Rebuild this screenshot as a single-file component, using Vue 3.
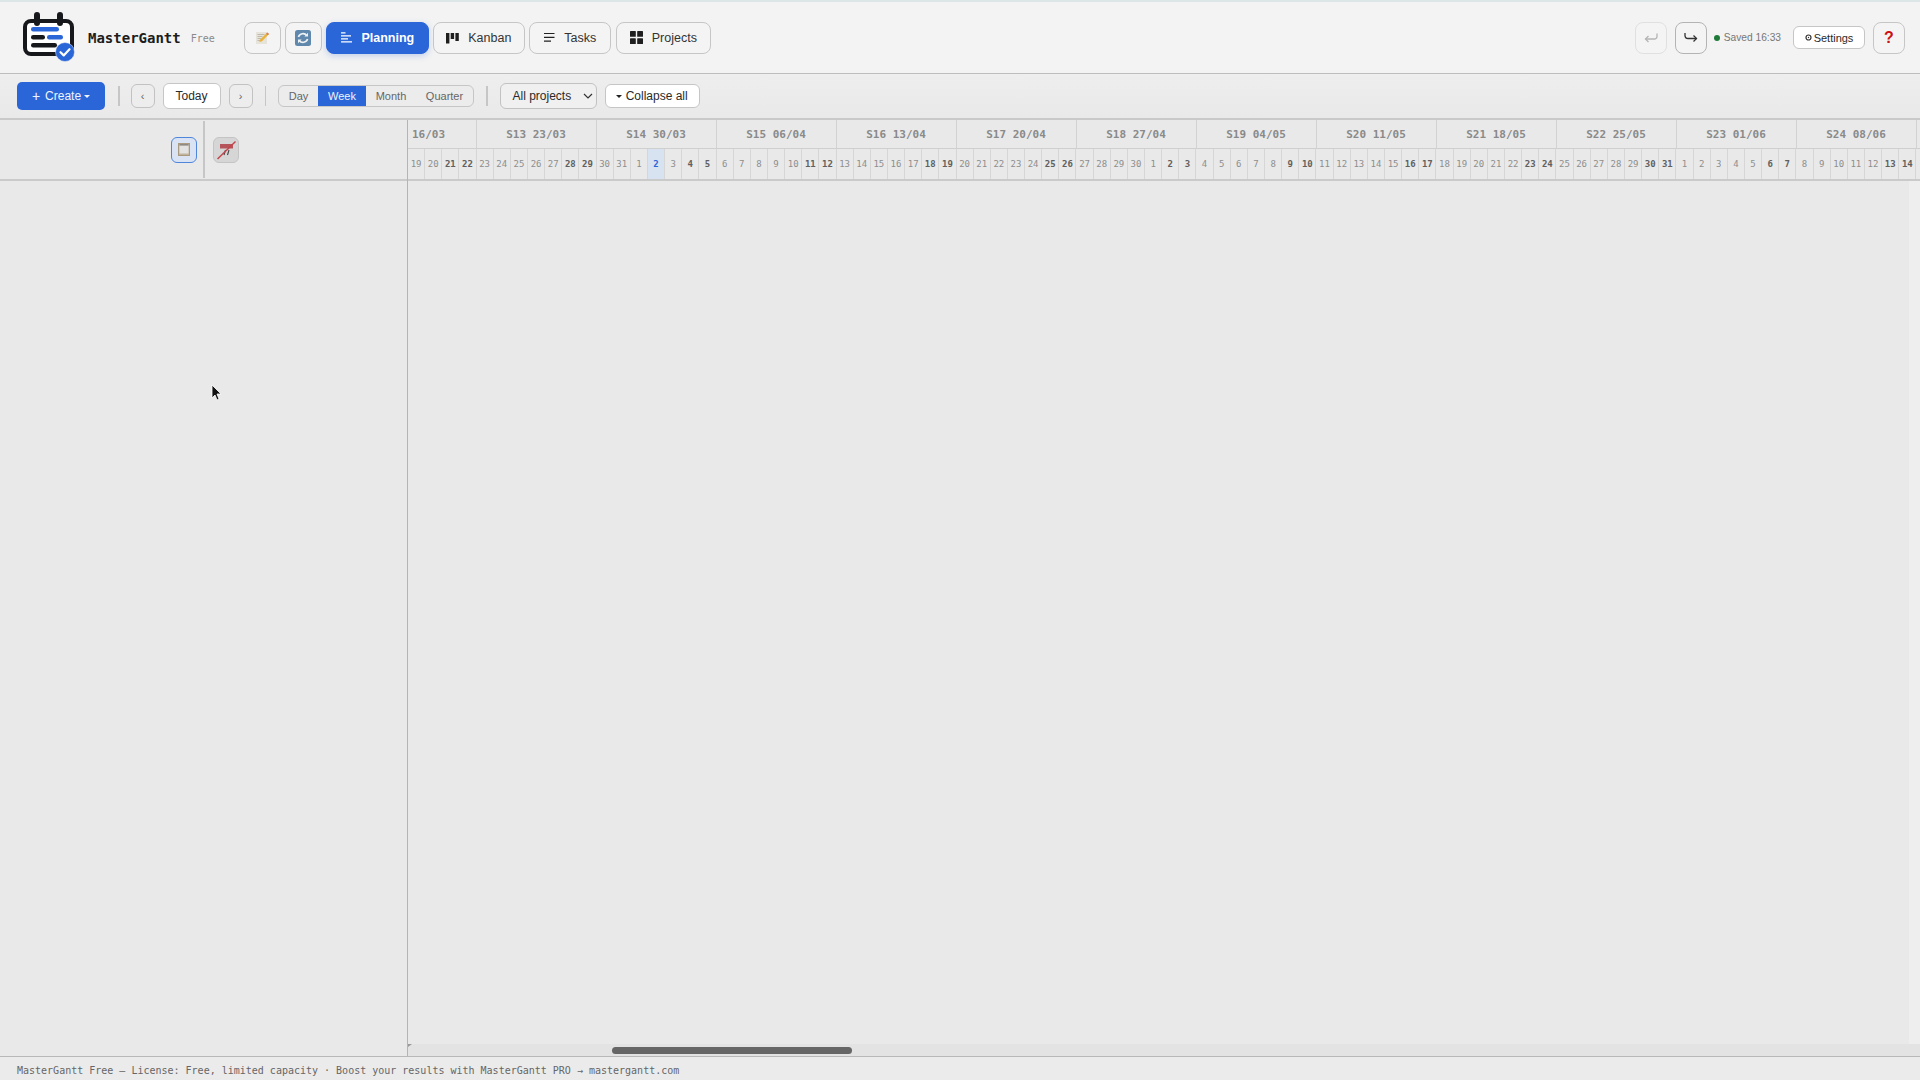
<script setup>
import { computed } from 'vue'
const months = [[3, 19, 31], [4, 1, 30], [5, 1, 31], [6, 1, 14]]
const days = computed(() => {
  const out = []
  for (const [m, a, b] of months) {
    for (let d = a; d <= b; d++) {
      const wd = new Date(2026, m - 1, d).getDay()
      out.push({ key: `${m}-${d}`, d, weekend: wd === 0 || wd === 6, today: m === 4 && d === 2 })
    }
  }
  return out
})
const weeks = [
  { t: '16/03', w: 4, first: true },
  { t: 'S13 23/03', w: 7 }, { t: 'S14 30/03', w: 7 }, { t: 'S15 06/04', w: 7 },
  { t: 'S16 13/04', w: 7 }, { t: 'S17 20/04', w: 7 }, { t: 'S18 27/04', w: 7 },
  { t: 'S19 04/05', w: 7 }, { t: 'S20 11/05', w: 7 }, { t: 'S21 18/05', w: 7 },
  { t: 'S22 25/05', w: 7 }, { t: 'S23 01/06', w: 7 }, { t: 'S24 08/06', w: 7 }
]
const dayW = 120 / 7
</script>

<template>
  <div class="app">
    <header class="top">
      <svg class="logo" width="54" height="50" viewBox="0 0 54 50">
        <rect x="3" y="9" width="47" height="33" rx="6" fill="#fff" stroke="#17181c" stroke-width="4"/>
        <path d="M15 3v8M38 3v8" stroke="#17181c" stroke-width="6" stroke-linecap="round"/>
        <rect x="9" y="15" width="28" height="4.500" rx="2.200" fill="#2b66d9"/>
        <rect x="9" y="23" width="14" height="4.500" rx="2.200" fill="#17181c"/>
        <rect x="25" y="23" width="16" height="4.500" rx="2.200" fill="#2b66d9"/>
        <rect x="9" y="31" width="26" height="4.500" rx="2.200" fill="#17181c"/>
        <circle cx="43" cy="40" r="9.500" fill="#2b66d9" stroke="#f3f3f3" stroke-width=".5"/>
        <path d="M38.500 40.200l3.200 3.200 5.800-6.200" fill="none" stroke="#fff" stroke-width="2.200" stroke-linecap="round" stroke-linejoin="round"/>
      </svg>
      <span class="brand">MasterGantt</span>
      <span class="plan">Free</span>
      <div class="nav">
        <button class="nbtn icon">
          <svg width="15" height="15" viewBox="0 0 15 15">
            <path d="M1 2h11v12H1z" fill="#e6e3da"/>
            <path d="M2.500 4.500h7M2.500 6.500h5M2.500 8.500h4M2.500 10.500h3" stroke="#b5b1a4" stroke-width=".8"/>
            <path d="M12.300 2.500l1.700 1.500-7 7.200-2.600.9.800-2.500z" fill="#e8b23c"/>
            <path d="M12.300 2.500l1.700 1.500-1.200 1.200-1.700-1.500z" fill="#d67a72"/>
          </svg>
        </button>
        <button class="nbtn icon">
          <svg width="16" height="16" viewBox="0 0 16 16">
            <rect width="16" height="16" rx="2.500" fill="#5f88ac"/>
            <path d="M3.400 7a4.800 4.800 0 0 1 8.400-1.400M12.600 9a4.800 4.800 0 0 1-8.400 1.400" fill="none" stroke="#eef2f5" stroke-width="1.600"/>
            <path d="M13 2.800v3.600H9.400zM3 13.200V9.600h3.600z" fill="#eef2f5"/>
          </svg>
        </button>
        <button class="nbtn active">
          <svg width="12" height="11" viewBox="0 0 12 11"><path d="M1 1h4.500M1 4h10M1 7h7M1 10h11" stroke="#fff" stroke-width="1.200" transform="translate(0 -.2)"/></svg>
          Planning
        </button>
        <button class="nbtn kanban">
          <svg width="13" height="12" viewBox="0 0 13 12" fill="#1f1f1f"><rect x="0" y="1" width="3.400" height="10.500"/><rect x="4.700" y="1" width="3.400" height="6"/><rect x="9.400" y="1" width="3.400" height="8"/></svg>
          Kanban
        </button>
        <button class="nbtn tasks">
          <svg width="12" height="11" viewBox="0 0 12 11"><path d="M1 1.500h10.500M1 5.300h10.500M1 9.200h7" stroke="#222" stroke-width="1.200"/></svg>
          Tasks
        </button>
        <button class="nbtn projects">
          <svg width="13" height="13" viewBox="0 0 13 13" fill="#1f1f1f"><rect width="5.800" height="5.800" rx=".6"/><rect x="7.200" width="5.800" height="5.800" rx=".6"/><rect y="7.200" width="5.800" height="5.800" rx=".6"/><rect x="7.200" y="7.200" width="5.800" height="5.800" rx=".6"/></svg>
          Projects
        </button>
      </div>
      <div class="spacer"></div>
      <button class="nbtn icon sq disabled">
        <svg width="14" height="12" viewBox="0 0 14 12" fill="none" stroke="#b4b4b4" stroke-width="1.300"><path d="M13 1.500v3a2.500 2.500 0 0 1-2.500 2.500H1.500"/><path d="M4.500 4l-3 3 3 3"/></svg>
      </button>
      <button class="nbtn icon sq redo">
        <svg width="14" height="12" viewBox="0 0 14 12" fill="none" stroke="#333" stroke-width="1.300"><path d="M1 1v2.500A3 3 0 0 0 4 6.500h8.500"/><path d="M9.500 3.500l3 3-3 3"/></svg>
      </button>
      <span class="saved"><i class="dot"></i>Saved 16:33</span>
      <button class="settings">
        <svg width="7" height="7" viewBox="0 0 7 7"><circle cx="3.500" cy="3.500" r="2.500" fill="none" stroke="#333" stroke-width="1.200"/><circle cx="3.500" cy="3.500" r=".7" fill="#333"/></svg>
        Settings
      </button>
      <button class="nbtn icon sq help">?</button>
    </header>

    <div class="toolbar">
      <button class="create"><span class="plus">+</span> Create <span class="caret light"></span></button>
      <i class="sep s1"></i>
      <button class="arrow">‹</button>
      <button class="today">Today</button>
      <button class="arrow">›</button>
      <i class="sep s2"></i>
      <div class="seg">
        <span class="day">Day</span>
        <span class="week">Week</span>
        <span class="month">Month</span>
        <span class="quarter">Quarter</span>
      </div>
      <i class="sep s3"></i>
      <div class="select">All projects
        <svg width="10" height="6" viewBox="0 0 10 6" fill="none" stroke="#333" stroke-width="1.200"><path d="M1 1l4 4 4-4"/></svg>
      </div>
      <button class="collapse"><span class="caret"></span> Collapse all</button>
    </div>

    <div class="main">
      <aside class="left">
        <div class="lhead">
          <button class="mini on">
            <svg width="12" height="13" viewBox="0 0 12 13"><rect x=".5" y=".5" width="11" height="12" fill="#c2b49c" stroke="#a99a80"/><rect x="1.500" y="2.500" width="9" height="8" fill="#e2e2e2"/><rect x="1.500" y="1" width="9" height="1.500" fill="#8d8a85"/></svg>
          </button>
          <i class="vline"></i>
          <button class="mini off">
            <svg width="22" height="22" viewBox="0 0 22 22">
              <rect x="5" y="5" width="13" height="4.500" fill="#b5545a"/>
              <path d="M10.500 11l-1.500 5M14 11l-1.500 5" stroke="#444" stroke-width="1.100"/>
              <path d="M2.500 20L20.500 2.500" stroke="#c4464c" stroke-width="1.500"/>
            </svg>
          </button>
        </div>
      </aside>
      <section class="right">
        <div class="rhead">
          <div class="weeks">
            <div v-for="w in weeks" :key="w.t" class="wk" :class="{ first: w.first }" :style="{ width: w.w * dayW + 'px' }">{{ w.t }}</div>
          </div>
          <div class="days">
            <div v-for="d in days" :key="d.key" class="dy" :class="{ we: d.weekend, now: d.today }" :style="{ width: dayW + 'px' }">{{ d.d }}</div>
          </div>
        </div>
        <div class="canvas"><div class="vtrack"></div></div>
        <div class="hbar"><i class="tri"></i><div class="thumb"></div></div>
      </section>
    </div>

    <footer class="status">MasterGantt Free — License: Free, limited capacity · Boost your results with MasterGantt PRO → mastergantt.com</footer>

    <svg class="cursor" width="12" height="18" viewBox="0 0 12 18">
      <path d="M1 1v13l3-3 2 5 2-1-2-5h4z" fill="#111" stroke="#fff" stroke-width=".8"/>
    </svg>
  </div>
</template>

<style scoped>
.app {
  position: relative;
  width: 1920px;
  height: 1080px;
  display: flex;
  flex-direction: column;
  overflow: hidden;
  background: #e9e9e9;
  font-family: "Liberation Sans", Arial, sans-serif;
  color: #2a2a2a;
}
button { font-family: inherit; cursor: default; }
.top {
  height: 74px;
  box-sizing: border-box;
  border-top: 2px solid #dce6e6;
  border-bottom: 1px solid #bdbdbd;
  background: #f3f3f3;
  display: flex;
  align-items: center;
  padding: 0 15px 0 22px;
  flex: none;
}
.logo { flex: none; margin-top: -2px; }
.brand {
  margin-left: 12px;
  font: 600 14px "DejaVu Sans Mono", monospace;
  color: #1c1c1c;
}
.plan {
  margin-left: 10px;
  font: 10px "DejaVu Sans Mono", monospace;
  color: #8a8a8a;
  padding-top: 2px;
}
.nav { display: flex; gap: 4px; margin-left: 29px; }
.nbtn {
  height: 32px;
  box-sizing: border-box;
  border: 1.500px solid #c6c6c6;
  border-radius: 8px;
  background: #f4f4f4;
  display: flex;
  align-items: center;
  justify-content: center;
  gap: 9px;
  padding: 0;
  font-size: 12.500px;
  color: #333;
}
.nbtn.icon { width: 37px; }
.nbtn.active {
  background: #2b66d9;
  border-color: #2b66d9;
  color: #fff;
  font-weight: 700;
  font-size: 12.500px;
  box-shadow: 0 2px 6px rgba(43, 102, 217, .25);
  width: 103px;
}
.kanban { width: 92px; }
.tasks { width: 82px; }
.projects { width: 95px; margin-left: 1px; }
.nbtn.sq { width: 32px; }
.nbtn.disabled { border-color: #e0e0e0; margin-right: 8px; }
.nbtn.redo { margin-right: 7px; border-color: #b4b4b4; }
.spacer { flex: 1; }
.saved {
  display: flex;
  align-items: center;
  font-size: 10.200px;
  color: #777;
  gap: 4px;
  margin-right: 12px;
}
.dot { width: 6px; height: 6px; border-radius: 50%; background: #1f7a3a; }
.settings {
  width: 72px;
  height: 23px;
  box-sizing: border-box;
  border: 1.200px solid #c6c6c6;
  border-radius: 6px;
  background: #fff;
  font-size: 11px;
  color: #2a2a2a;
  display: flex;
  align-items: center;
  justify-content: center;
  gap: 2px;
  padding: 0;
  margin-right: 8px;
}
.help { color: #cc1111; font-size: 16px; font-weight: 700; }
.toolbar {
  height: 46px;
  flex: none;
  box-sizing: border-box;
  border-bottom: 2px solid #c9c9c9;
  background: linear-gradient(#eeeeee, #e9e9e9);
  display: flex;
  align-items: center;
  padding: 0 0 0 17px;
}
.create {
  width: 88px;
  height: 28px;
  border: 0;
  border-radius: 5px;
  background: #2b66d9;
  color: #f0f4fc;
  font-size: 12px;
  padding: 0;
  display: flex;
  align-items: center;
  justify-content: center;
  gap: 3px;
}
.plus { font-size: 14px; margin-right: 2px; }
.caret {
  display: inline-block;
  width: 0;
  height: 0;
  border: 3px solid transparent;
  border-top: 3.500px solid #222;
  border-bottom: 0;
  vertical-align: middle;
}
.caret.light { border-top-color: #f0f4fc; }
.sep { width: 1.500px; height: 20px; background: #c6c6c6; flex: none; }
.s1 { margin: 0 11px 0 13px; }
.s2 { margin: 0 12px 0 12px; }
.s3 { margin: 0 12px 0 12px; }
.arrow {
  width: 24px;
  height: 24px;
  border: 1.500px solid #c2c2c2;
  border-radius: 6px;
  background: #ededed;
  color: #666;
  font-size: 11px;
  padding: 0;
}
.today {
  width: 58px;
  height: 26px;
  margin: 0 8px;
  border: 1.500px solid #c6c6c6;
  border-radius: 6px;
  background: #fff;
  font-size: 12px;
  color: #2a2a2a;
  padding: 0;
}
.seg {
  height: 22px;
  width: 196px;
  box-sizing: border-box;
  border: 1.500px solid #c6c6c6;
  border-radius: 6px;
  overflow: hidden;
  display: flex;
  font-size: 11px;
  color: #666;
  background: #ececec;
}
.seg span { display: flex; align-items: center; justify-content: center; }
.seg .day { width: 39px; }
.seg .week { width: 48px; background: #2b66d9; color: #f0f4fc; }
.seg .month { width: 50px; }
.seg .quarter { flex: 1; }
.select {
  width: 97px;
  height: 26px;
  box-sizing: border-box;
  border: 1.500px solid #c2c2c2;
  border-radius: 6px;
  background: #f0f0f0;
  font-size: 12px;
  color: #2a2a2a;
  display: flex;
  align-items: center;
  justify-content: space-between;
  padding: 0 3px 0 12px;
}
.collapse {
  width: 95px;
  height: 24px;
  margin-left: 8px;
  border: 1.500px solid #c6c6c6;
  border-radius: 6px;
  background: #fff;
  font-size: 12px;
  color: #2a2a2a;
  padding: 0;
}
.main { flex: 1; display: flex; min-height: 0; }
.left { width: 408px; flex: none; box-sizing: border-box; border-right: 1px solid #b4b4b4; }
.lhead {
  height: 61px;
  box-sizing: border-box;
  border-bottom: 2px solid #cacaca;
  display: flex;
  align-items: center;
  padding-left: 171px;
}
.vline { width: 1.500px; height: 57px; background: #c6c6c6; margin: 1px 8px 0 6px; align-self: flex-start; }
.mini {
  width: 26px;
  height: 26px;
  box-sizing: border-box;
  border-radius: 6px;
  padding: 0;
  display: flex;
  align-items: center;
  justify-content: center;
}
.mini.on { background: #d9e3f3; border: 1.500px solid #4f86dc; }
.mini.off { background: #d6d6d6; border: 1.500px solid #c4c4c4; }
.right { flex: 1; min-width: 0; display: flex; flex-direction: column; overflow: hidden; }
.rhead { height: 61px; flex: none; box-sizing: border-box; border-bottom: 2px solid #cacaca; overflow: hidden; }
.weeks { display: flex; height: 29px; box-sizing: border-box; border-bottom: 1px solid #cfcfcf; }
.wk {
  flex: none;
  box-sizing: border-box;
  border-right: 1.500px solid #d2d2d2;
  font: 600 11px/29px "DejaVu Sans Mono", monospace;
  color: #8a8a8a;
  text-align: center;
  white-space: nowrap;
  overflow: hidden;
}
.wk.first { text-align: left; padding-left: 4px; }
.days { display: flex; height: 30px; }
.dy {
  flex: none;
  box-sizing: border-box;
  border-right: 1.500px solid #d6d6d6;
  font: 9px/30px "DejaVu Sans Mono", monospace;
  color: #8e8e8e;
  text-align: center;
  overflow: hidden;
}
.dy.we { font-weight: 700; color: #606060; }
.dy.now { background: #d8e3f2; color: #2b66d9; font-weight: 700; }
.canvas { flex: 1; display: flex; justify-content: flex-end; }
.vtrack { width: 11px; background: #eeeeee; }
.hbar { height: 12px; flex: none; background: #e3e3e3; display: flex; align-items: center; position: relative; }
.tri {
  position: absolute;
  left: 0;
  top: 0;
  width: 0;
  height: 0;
  border-top: 3px solid #999;
  border-right: 4px solid transparent;
}
.thumb { width: 240px; height: 7px; border-radius: 4px; background: #666; margin-left: 204px; }
.status {
  height: 24px;
  flex: none;
  box-sizing: border-box;
  border-top: 1px solid #b8b8b8;
  padding: 0 0 0 17px;
  font: 10px/27px "DejaVu Sans Mono", monospace;
  color: #666;
  background: #ebebeb;
  white-space: nowrap;
}
.cursor { position: absolute; left: 211px; top: 384px; }
</style>
